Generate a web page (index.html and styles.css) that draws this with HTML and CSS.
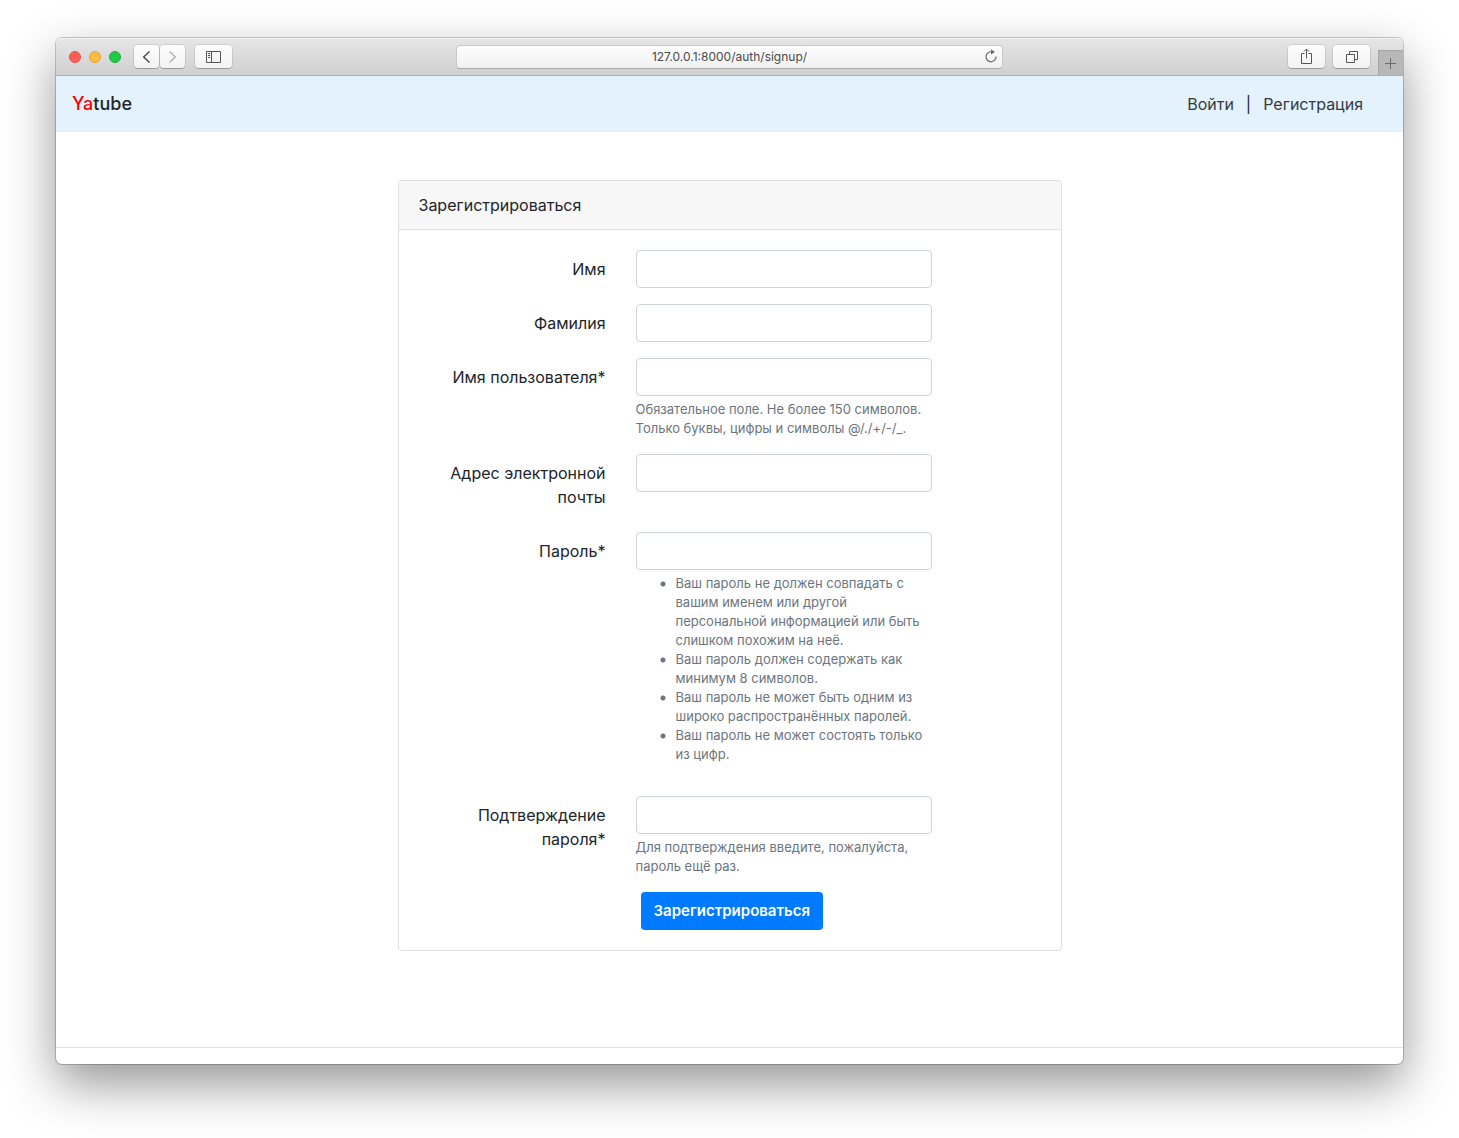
FILE: index.html
```html
<!DOCTYPE html>
<html lang="ru">
<head>
<meta charset="utf-8">
<meta name="viewport" content="width=device-width, initial-scale=1">
<title>Зарегистрироваться | Yatube</title>
<link rel="stylesheet" href="styles.css">
</head>
<body>
<div class="window">
  <header class="toolbar">
    <div class="toolbar-left">
      <div class="lights">
        <span class="light light-red"></span>
        <span class="light light-yellow"></span>
        <span class="light light-green"></span>
      </div>
      <div class="history">
        <button class="tool tool-small" type="button" aria-label="Назад"><svg width="9" height="14" viewBox="0 0 9 14"><path d="M7.500 1.500 1.700 7l5.800 5.500" fill="none" stroke="#4c4c4c" stroke-width="1.500"/></svg></button>
        <button class="tool tool-small" type="button" aria-label="Вперёд"><svg width="9" height="14" viewBox="0 0 9 14"><path d="M1.500 1.500 7.300 7l-5.800 5.500" fill="none" stroke="#b4b4b4" stroke-width="1.500"/></svg></button>
      </div>
      <button class="tool" type="button" aria-label="Боковая панель"><svg width="15" height="12" viewBox="0 0 15 12"><path d="M.5.5h14v11H.5zM5.500.5v11M2 2.500h2M2 4.500h2M2 6.500h2" fill="none" stroke="#555"/></svg></button>
    </div>
    <div class="address">
      <input class="address-input" type="text" value="127.0.0.1:8000/auth/signup/" aria-label="Адрес">
      <button class="reload" type="button" aria-label="Обновить"><svg width="12" height="14" viewBox="0 0 12 14"><path d="M6.500 2.800A5 5 0 1 0 11 7.500" fill="none" stroke="#6c6c6c" stroke-width="1.200"/><path d="M6 .2 10 3 6 5.600z" fill="#6c6c6c"/></svg></button>
    </div>
    <div class="toolbar-right">
      <button class="tool" type="button" aria-label="Поделиться"><svg width="11" height="17" viewBox="0 0 11 17"><path d="M3.500 5.500h-3v10h10v-10h-3M5.500 10.500V1M3 3.500 5.500 1 8 3.500" fill="none" stroke="#555"/></svg></button>
      <button class="tool" type="button" aria-label="Все вкладки"><svg width="12" height="12" viewBox="0 0 12 12"><path d="M.5 3.500h8v8h-8zM3.500 3.500v-3h8v8h-3" fill="none" stroke="#555"/></svg></button>
      <button class="new-tab" type="button" aria-label="Новая вкладка"><svg width="11" height="11" viewBox="0 0 11 11"><path d="M5.500 0v11M0 5.500h11" fill="none" stroke="#6b6b6b"/></svg></button>
    </div>
  </header>

  <nav class="navbar">
    <a class="brand" href="/"><span class="brand-accent">Ya</span>tube</a>
    <div class="nav-links">
      <a class="nav-link" href="/auth/login/">Войти</a>
      <span>|</span>
      <a class="nav-link" href="/auth/signup/">Регистрация</a>
    </div>
  </nav>

  <main class="content">
    <section class="card">
      <div class="card-header">Зарегистрироваться</div>
      <form class="card-body" method="post">
        <div class="form-row">
          <label class="label" for="first_name">Имя</label>
          <div class="field"><input class="control" type="text" id="first_name"></div>
        </div>
        <div class="form-row">
          <label class="label" for="last_name">Фамилия</label>
          <div class="field"><input class="control" type="text" id="last_name"></div>
        </div>
        <div class="form-row">
          <label class="label" for="username">Имя пользователя*</label>
          <div class="field">
            <input class="control" type="text" id="username">
            <small class="help">Обязательное поле. Не более 150 символов. Только буквы, цифры и символы @/./+/-/_.</small>
          </div>
        </div>
        <div class="form-row">
          <label class="label" for="email">Адрес электронной почты</label>
          <div class="field"><input class="control" type="email" id="email"></div>
        </div>
        <div class="form-row">
          <label class="label" for="password1">Пароль*</label>
          <div class="field">
            <input class="control" type="password" id="password1">
            <ul class="help help-list">
              <li>Ваш пароль не должен совпадать с вашим именем или другой персональной информацией или быть слишком похожим на неё.</li>
              <li>Ваш пароль должен содержать как минимум 8 символов.</li>
              <li>Ваш пароль не может быть одним из широко распространённых паролей.</li>
              <li>Ваш пароль не может состоять только из цифр.</li>
            </ul>
          </div>
        </div>
        <div class="form-row">
          <label class="label" for="password2">Подтверждение пароля*</label>
          <div class="field">
            <input class="control" type="password" id="password2">
            <small class="help">Для подтверждения введите, пожалуйста, пароль ещё раз.</small>
          </div>
        </div>
        <div class="form-row">
          <div class="field field-submit"><button class="submit" type="submit">Зарегистрироваться</button></div>
        </div>
      </form>
    </section>
  </main>
  <footer class="footer"></footer>
</div>
</body>
</html>
```
FILE: styles.css
```css
* { box-sizing: border-box; }

body {
  margin: 0;
  padding: 38px 56px 74px;
  background: #fff;
  color: #212529;
  font: 16px/24px Inter, "Noto Sans", sans-serif;
}

button, input { font: inherit; color: inherit; }
svg { display: block; }

.window {
  border-radius: 6px;
  background: #fff;
  box-shadow: 0 0 0 1px rgba(0, 0, 0, .2), 0 20px 50px rgba(0, 0, 0, .42);
}

.toolbar {
  display: grid;
  grid-template-columns: 1fr minmax(0, 547px) 1fr;
  align-items: center;
  height: 38px;
  border-bottom: 1px solid #adadad;
  border-radius: 6px 6px 0 0;
  background: linear-gradient(#e6e6e6, #d0d0d0);
  box-shadow: inset 0 1px #f5f5f5;
}

.toolbar-left, .toolbar-right, .lights, .history { display: flex; align-items: center; }
.toolbar-left { gap: 10px; padding-left: 13px; }
.lights { gap: 8px; margin-right: 3px; }
.light { width: 12px; height: 12px; border: 1px solid; border-radius: 50%; }
.light-red { background: #ff5f57; border-color: #e5504a; }
.light-yellow { background: #ffbd3f; border-color: #e2a338; }
.light-green { background: #1fcc48; border-color: #1cab38; }
.history { gap: 1px; }

.tool {
  display: flex;
  align-items: center;
  justify-content: center;
  width: 37px;
  height: 23px;
  padding: 0;
  border: 0;
  border-radius: 4px;
  background: linear-gradient(#fdfdfd, #f3f3f3);
  box-shadow: 0 0 0 1px rgba(0, 0, 0, .09), 0 1px rgba(0, 0, 0, .2);
}
.tool-small { width: 25px; }

.address { position: relative; }
.address-input {
  display: block;
  width: 100%;
  height: 24px;
  padding: 1px 24px 0;
  border: 1px solid #c9c9c9;
  border-bottom-color: #a9a9a9;
  border-radius: 4px;
  background: linear-gradient(#fdfdfd, #f1f1f1);
  color: #4a4a4a;
  font-size: 12px;
  text-align: center;
}
.reload { position: absolute; top: 4px; right: 6px; padding: 0; border: 0; background: none; }

.toolbar-right { justify-content: flex-end; gap: 8px; }
.new-tab {
  display: flex;
  align-items: center;
  justify-content: center;
  align-self: flex-end;
  width: 25px;
  height: 25px;
  margin-top: 12px;
  padding: 0 2px 0 0;
  border: 0;
  border-top: 1px solid #a6a6a6;
  border-left: 1px solid #a6a6a6;
  background: #b8b8b8;
}

.navbar {
  display: flex;
  align-items: baseline;
  justify-content: space-between;
  padding: 16px 40px 16px 16px;
  background: #e3f2fd;
}
.brand { color: #212529; font-size: 18px; font-weight: 500; text-decoration: none; }
.brand-accent { color: #f00; }
.nav-links { display: flex; gap: 12px; }
.nav-link { color: #343a40; text-decoration: none; }

.content { padding: 48px 24px 96px; }
.card {
  max-width: 664px;
  margin: 0 auto;
  border: 1px solid #dfdfdf;
  border-radius: 4px;
}
.card-header {
  padding: 12px 20px;
  border-bottom: 1px solid #dfdfdf;
  border-radius: 3px 3px 0 0;
  background: #f7f7f7;
}
.card-body { padding: 20px; }

.form-row {
  display: grid;
  grid-template-columns: 187fr 296fr 79fr;
  column-gap: 30px;
  margin-bottom: 16px;
}
.form-row:last-child { margin-bottom: 0; }
.label { padding: 7px 0; text-align: right; }
.field { grid-column: 2; }

.control {
  display: block;
  width: 100%;
  height: 38px;
  padding: 6px 12px;
  border: 1px solid #ced4da;
  border-radius: 4px;
  background: #fff;
}

.help { display: block; margin-top: 4px; color: #6c757d; font-size: 13px; line-height: 19px; }
.help-list { margin-bottom: 16px; padding-left: 24px; list-style: none; }
.help-list li {
  padding-left: 16px;
  background: radial-gradient(circle at 3px 10px, #6c757d 2px, transparent 3px) no-repeat;
}

.field-submit { padding-left: 5px; }
.submit {
  height: 38px;
  padding: 0 13px;
  border: 0;
  border-radius: 4px;
  background: #007bff;
  color: #fff;
  font-size: 15px;
  font-weight: 600;
}

.footer { height: 17px; border-top: 1px solid #dfdfdf; }
```
